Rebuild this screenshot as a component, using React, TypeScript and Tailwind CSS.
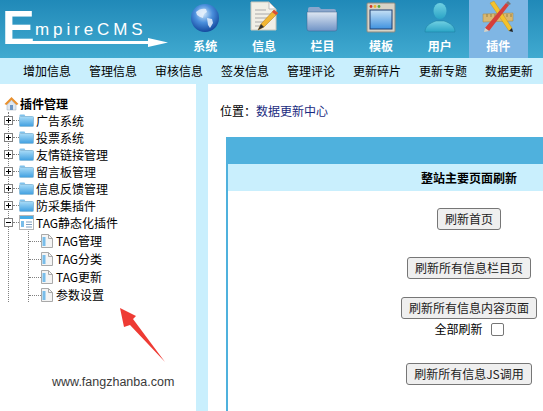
import React from 'react'

const CJK = "font-['Noto_Sans_CJK_SC','Liberation_Sans',sans-serif]"

const GlobeIcon = () => (
  <svg width="30" height="30" viewBox="0 0 30 30">
    <defs>
      <radialGradient id="gl" cx="45%" cy="35%" r="70%">
        <stop offset="0" stopColor="#cfe6fa" />
        <stop offset="0.45" stopColor="#4a8fdc" />
        <stop offset="1" stopColor="#0c3f96" />
      </radialGradient>
    </defs>
    <circle cx="15" cy="15" r="14" fill="url(#gl)" />
    <path d="M6 9c3-3 7-4 10-3l1 3-3 2-1 4-3-1-3-2zM17 15l5 1 1 4-3 5-2-3z" fill="#e8f1fb" opacity="0.85" />
  </svg>
)

const NoteIcon = () => (
  <svg width="30" height="32" viewBox="0 0 30 32">
    <path d="M2 1h18l7 7v21H2z" fill="#f1efe6" stroke="#c9c7bc" />
    <path d="M20 1v7h7z" fill="#fff" stroke="#bbb" />
    <path d="M6 9h11M6 13h16M6 17h14M6 21h10M6 25h8" stroke="#aaa" strokeWidth="1" />
    <path d="M9 29l3-6L25 9l4 3-14 14z" fill="#f2b632" stroke="#a8761a" strokeWidth="0.5" />
    <path d="M9 29l3-6 3 3z" fill="#333" />
    <path d="M25 9l4 3-2 2-4-3z" fill="#d84a3a" />
  </svg>
)

const FolderIcon = () => (
  <svg width="32" height="30" viewBox="0 0 32 30">
    <defs>
      <linearGradient id="fd" x1="0" y1="0" x2="0" y2="1">
        <stop offset="0" stopColor="#dfe7f2" />
        <stop offset="1" stopColor="#6f93c6" />
      </linearGradient>
    </defs>
    <path d="M2 6q0-2 2-2h9l2 2h13q2 0 2 2v4H2z" fill="#8ba6cc" />
    <path d="M1 9h30v17q0 2-2 2H3q-2 0-2-2z" fill="url(#fd)" stroke="#3f628f" strokeWidth="0.5" />
  </svg>
)

const WindowIcon = () => (
  <svg width="30" height="31" viewBox="0 0 30 31">
    <defs>
      <linearGradient id="wn" x1="0" y1="0" x2="0" y2="1">
        <stop offset="0" stopColor="#c6e0f5" />
        <stop offset="1" stopColor="#3f92e0" />
      </linearGradient>
    </defs>
    <rect x="1" y="1" width="28" height="29" rx="1" fill="#d8d3c6" stroke="#8d8a80" />
    <circle cx="5" cy="4.5" r="1.4" fill="#d23b2a" />
    <circle cx="9" cy="4.5" r="1.4" fill="#e9b52e" />
    <circle cx="13" cy="4.5" r="1.4" fill="#5aa63a" />
    <rect x="4" y="8" width="22" height="19" fill="url(#wn)" stroke="#1f3f70" />
  </svg>
)

const UserIcon = () => (
  <svg width="32" height="31" viewBox="0 0 32 31">
    <defs>
      <linearGradient id="us" x1="0" y1="0" x2="0" y2="1">
        <stop offset="0" stopColor="#70d0e2" />
        <stop offset="1" stopColor="#2aa4c6" />
      </linearGradient>
    </defs>
    <ellipse cx="16" cy="9" rx="6.5" ry="8" fill="url(#us)" />
    <path d="M1 30c0-6 5-9 11-11h8c6 2 11 5 11 11z" fill="url(#us)" stroke="#1d7f9f" strokeWidth="0.5" />
  </svg>
)

const ToolsIcon = () => (
  <svg width="32" height="33" viewBox="0 0 32 33">
    <path d="M1 14l30-1v8L1 22z" fill="#d9b871" stroke="#a58643" strokeWidth="0.5" />
    <path d="M5 14v3M9 14v3M13 14v3M17 14v3M21 14v3M25 14v3M29 14v3" stroke="#7f6830" strokeWidth="0.7" />
    <path d="M8 3l4-2 18 27-3 3z" fill="#f3c22c" stroke="#b78b13" strokeWidth="0.4" />
    <path d="M27 31l3-3 1 4z" fill="#222" />
    <path d="M3 28L24 3l3 2L7 31z" fill="#d63f3a" />
    <path d="M24 3l2-2 3 3-2 1z" fill="#777" />
    <path d="M3 28l4 3-5 1z" fill="#d8d3c6" />
  </svg>
)

const NAV = [
  { label: '系统', icon: GlobeIcon },
  { label: '信息', icon: NoteIcon },
  { label: '栏目', icon: FolderIcon },
  { label: '模板', icon: WindowIcon },
  { label: '用户', icon: UserIcon },
  { label: '插件', icon: ToolsIcon, active: true },
]

const SUB_NAV = ['增加信息', '管理信息', '审核信息', '签发信息', '管理评论', '更新碎片', '更新专题', '数据更新']

const FOLDERS = ['广告系统', '投票系统', '友情链接管理', '留言板管理', '信息反馈管理', '防采集插件']
const TAG_ITEMS = ['TAG管理', 'TAG分类', 'TAG更新', '参数设置']

const Toggle = ({ open }: { open?: boolean }) => (
  <span className="relative size-[9px] shrink-0 border border-[#808080] bg-white">
    <span className="absolute left-[1px] top-[3px] h-px w-[5px] bg-black" />
    {!open && <span className="absolute left-[3px] top-[1px] h-[5px] w-px bg-black" />}
  </span>
)

const FolderSmall = () => (
  <svg width="15" height="13" viewBox="0 0 15 13" className="shrink-0">
    <defs>
      <linearGradient id="fs" x1="0" y1="0" x2="0" y2="1">
        <stop offset="0" stopColor="#a9dcf8" />
        <stop offset="1" stopColor="#3f9fe0" />
      </linearGradient>
    </defs>
    <path d="M0.5 2.5V1.5q0-1 1-1h4l1 2z" fill="#7fc2ec" />
    <rect x="0.5" y="2.5" width="14" height="10" rx="1" fill="url(#fs)" stroke="#8fbfdc" />
  </svg>
)

const PageSmall = () => (
  <svg width="12" height="14" viewBox="0 0 12 14" className="shrink-0">
    <path d="M0.5 0.5h7l4 4v9h-11z" fill="#f4f4f4" stroke="#a9a9a9" />
    <rect x="1.5" y="3" width="3" height="9" fill="#79bdea" />
    <path d="M7.5 0.5v4h4" fill="none" stroke="#a9a9a9" />
  </svg>
)

const TagFolder = () => (
  <svg width="15" height="15" viewBox="0 0 15 15" className="shrink-0">
    <rect x="0.5" y="0.5" width="14" height="14" fill="#fff" stroke="#b5b5b5" />
    <rect x="1" y="1" width="13" height="3" fill="#45ace6" />
    <rect x="2" y="6" width="3" height="6" fill="#79bdea" />
    <path d="M7 7h6M7 9.5h6M7 12h6" stroke="#7e9fc0" />
  </svg>
)

const HomeIcon = () => (
  <svg width="15" height="15" viewBox="0 0 15 15" className="shrink-0">
    <path d="M7.5 1L0.5 8l2 1 5-5 5 5 2-1z" fill="#e8902e" />
    <path d="M3 9l4.5-4.5L12 9v5H3z" fill="#dfe7f0" stroke="#9aa9bb" strokeWidth="0.5" />
    <rect x="6" y="9" width="3" height="5" fill="#6d96c4" />
  </svg>
)

const RedArrow = () => (
  <svg width="52" height="60" viewBox="0 0 52 60" className="absolute left-[118px] top-[222px]">
    <path d="M2 2L18 10L15 13L47 56L12 19L6 21z" fill="#ee3b34" />
  </svg>
)

const Btn = ({ children }: { children: React.ReactNode }) => (
  <button className="h-[22px] rounded-[3px] border border-[#767676] bg-[#efefef] px-[7px] text-[12px] leading-none text-[#222] whitespace-nowrap">
    {children}
  </button>
)

const Header = () => (
  <header className="relative flex h-[58px] bg-gradient-to-b from-[#2089b8] to-[#40aad0]">
    {/* logo */}
    <div className="relative w-[176px] shrink-0 font-['Liberation_Sans',sans-serif] text-white">
      <span className="absolute left-[2px] top-[2px] text-[49px] font-bold leading-[50px]">E</span>
      <span className="absolute left-[35px] top-[20px] text-[17px] leading-[20px] tracking-[3.9px]">mpireCMS</span>
      <svg width="170" height="10" viewBox="0 0 170 10" className="absolute left-0 top-[38px]">
        <path d="M6 3h142V0l20 4.5-20 4.5V6H6z" fill="#fff" />
      </svg>
    </div>
    {NAV.map(({ label, icon: Icon, active }) => (
      <div
        key={label}
        className={`flex w-[58.6px] shrink-0 flex-col items-center ${active ? 'bg-[#7fb6e4]' : ''}`}
      >
        <div className="flex h-[36px] items-end justify-center pb-[3px]">
          <Icon />
        </div>
        <span className={`text-[12px] font-bold leading-[20px] text-white ${CJK}`}>{label}</span>
      </div>
    ))}
  </header>
)

const SubNav = () => (
  <nav className="flex h-[26px] items-center bg-[#c9effd] pl-[23px]">
    {SUB_NAV.map((item) => (
      <span key={item} className="w-[66px] shrink-0 text-[12px] leading-[26px] text-black">
        {item}
      </span>
    ))}
  </nav>
)

const Tree = () => (
  <aside className="relative h-full w-[196px] shrink-0 bg-white pl-[4px] pt-[11px] text-[12px] text-black">
    <div className="flex h-[17px] items-center gap-[1px] font-bold">
      <HomeIcon />
      <span>插件管理</span>
    </div>
    {/* dotted guides */}
    <div className="absolute left-[8px] top-[28px] h-[190px] border-l border-dotted border-[#808080]" />
    <div className="absolute left-[28px] top-[147px] h-[71px] border-l border-dotted border-[#808080]" />
    <div className="relative">
      {FOLDERS.map((name) => (
        <div key={name} className="flex h-[17px] items-center">
          <Toggle />
          <span className="h-0 w-[6px] border-t border-dotted border-[#808080]" />
          <FolderSmall />
          <span className="ml-[2px] leading-none">{name}</span>
        </div>
      ))}
      <div className="flex h-[17px] items-center">
        <Toggle open />
        <span className="h-0 w-[6px] border-t border-dotted border-[#808080]" />
        <TagFolder />
        <span className="ml-[2px] leading-none">TAG静态化插件</span>
      </div>
      <div className="pt-[1px]">
        {TAG_ITEMS.map((name) => (
          <div key={name} className="flex h-[18px] items-center pl-[25px]">
            <span className="h-0 w-[12px] border-t border-dotted border-[#808080]" />
            <PageSmall />
            <span className="ml-[3px] leading-none">{name}</span>
          </div>
        ))}
      </div>
    </div>
    <RedArrow />
    <span className="absolute left-[52px] top-[290px] text-[12.5px] leading-[16px] text-[#3a3a3a] font-['Liberation_Sans',sans-serif]">
      www.fangzhanba.com
    </span>
  </aside>
)

const Content = () => (
  <main className="min-w-0 flex-1 overflow-hidden bg-white pl-[12px] text-[12px] text-black">
    <p className="h-[53px] pt-[19px] leading-[16px]">
      位置：<span className="text-[#1a2a80]">数据更新中心</span>
    </p>
    <section className="ml-[6px] h-[274px] w-[484px] border-2 border-b-0 border-r-0 border-[#4fb1dd]">
      <div className="h-[25px] bg-[#4fb1dd]" />
      <div className="h-[27px] bg-[#c9effd] text-center font-bold leading-[27px]">整站主要页面刷新</div>
      <div className="flex flex-col items-center pt-[17px]">
        <Btn>刷新首页</Btn>
        <div className="mt-[27px]">
          <Btn>刷新所有信息栏目页</Btn>
        </div>
        <div className="mt-[18px]">
          <Btn>刷新所有信息内容页面</Btn>
        </div>
        <div className="flex h-[20px] items-center gap-[8px]">
          <span>全部刷新</span>
          <input type="checkbox" className="size-[13px] appearance-none rounded-[2px] border border-[#767676] bg-white" />
        </div>
        <div className="mt-[24px]">
          <Btn>刷新所有信息JS调用</Btn>
        </div>
      </div>
    </section>
  </main>
)

export default function App() {
  return (
    <div className={`h-[411px] w-[543px] overflow-hidden bg-white ${CJK}`}>
      <Header />
      <SubNav />
      <div className="flex h-[327px]">
        <Tree />
        <div className="w-[12px] shrink-0 bg-[#c9effd]" />
        <Content />
      </div>
    </div>
  )
}
